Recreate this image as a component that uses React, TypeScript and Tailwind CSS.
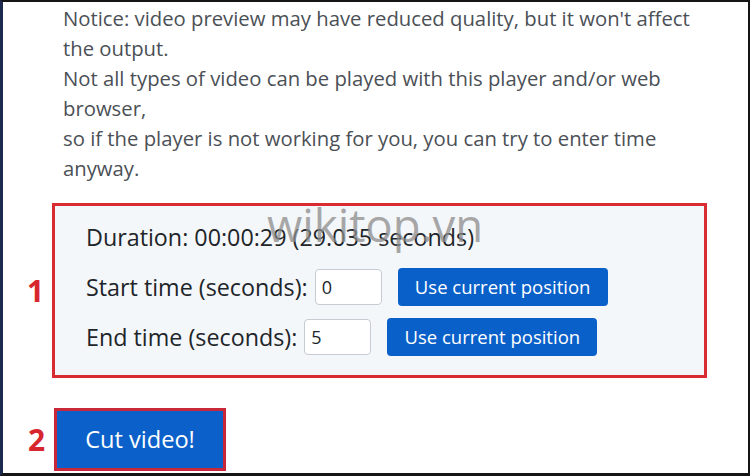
import React from 'react';

const TimeRow: React.FC<{ label: string; value: string }> = ({ label, value }) => (
  <div className="h-[50px] flex items-center">
    <span className="text-[23.3px] text-[#212529]">{label}</span>
    <input
      readOnly
      value={value}
      className="ml-[7px] w-[67px] h-[36px] rounded-[4px] border border-[#c6ccd3] bg-white px-[6px] text-[18px] text-[#212529] outline-none"
    />
    <button className="ml-[16px] w-[210px] h-[38px] rounded-[4px] bg-[#0a60c9] text-[18.5px] text-white">
      Use current position
    </button>
  </div>
);

const App: React.FC = () => {
  return (
    <div className="w-[750px] h-[476px] overflow-hidden bg-white">
      <div className="relative h-full border-t-2 border-b-[3px] border-l-[3px] border-r-2 border-t-[#151515] border-b-[#151515] border-l-[#1c2a4d] border-r-[#151515] font-['Open_Sans',sans-serif]">
        {/* Notice text */}
        <p className="pl-[60px] pt-[1px] text-[20.3px] leading-[30px] text-[#4b5056]">
          Notice: video preview may have reduced quality, but it won't affect
          <br />
          the output.
          <br />
          Not all types of video can be played with this player and/or web
          <br />
          browser,
          <br />
          so if the player is not working for you, you can try to enter time
          <br />
          anyway.
        </p>

        {/* Step 1: time settings */}
        <div className="mt-[20px] flex items-center">
          <div className="w-[49px] pl-[24px] text-[30px] font-bold text-[#d7262e] leading-none">1</div>
          <div className="w-[655px] h-[175px] border-[3px] border-[#d92b32] bg-[#f4f7fa] pl-[31px] pt-[6px]">
            <div className="h-[50px] flex items-center text-[23.3px] text-[#212529]">
              Duration: 00:00:29 (29.035 seconds)
            </div>
            <TimeRow label="Start time (seconds):" value="0" />
            <TimeRow label="End time (seconds):" value="5" />
          </div>
        </div>

        {/* Step 2: cut */}
        <div className="mt-[30px] flex items-center">
          <div className="w-[51px] pl-[25px] text-[30px] font-bold text-[#d7262e] leading-none">2</div>
          <button className="w-[172px] h-[63px] border-[3px] border-[#c9283a] bg-[#0b61c9] text-[23.6px] text-white">
            Cut video!
          </button>
        </div>

        {/* watermark */}
        <div className="absolute left-[264px] top-[200px] pointer-events-none text-[45.5px] leading-none text-[#8c8c8c] opacity-75">
          wikitop.vn
        </div>
      </div>
    </div>
  );
};

export default App;
